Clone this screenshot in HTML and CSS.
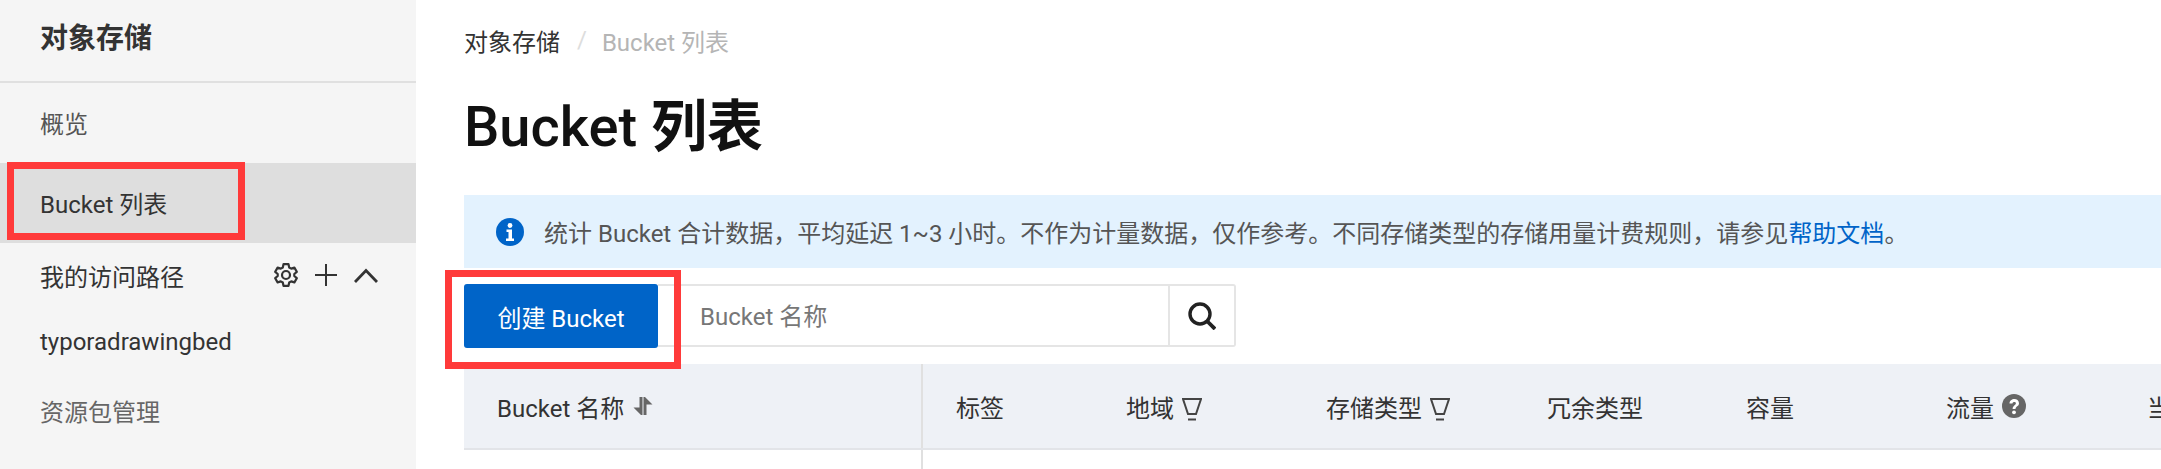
FILE: index.html
```html
<!DOCTYPE html>
<html lang="zh-CN">
<head>
<meta charset="UTF-8">
<meta name="viewport" content="width=device-width, initial-scale=1.0">
<title>Bucket 列表</title>
<link rel="stylesheet" href="styles.css">
</head>
<body>
  <div class="page">
    <aside class="sidebar">
      <div class="sidebar-title">对象存储</div>
      <div class="nav-item muted">概览</div>
      <div class="nav-item active">Bucket 列表</div>
      <div class="path-head">
        <span>我的访问路径</span>
        <span class="path-tools">
          <svg class="tool" viewBox="0 0 24 24" fill="none" stroke="#333" stroke-width="2.200" stroke-linejoin="round"><path d="M9.500 1.200h5l.7 3.300 2 1.100 3.200-1 2.400 4.200-2.500 2.200v2l2.500 2.200-2.400 4.200-3.200-1-2 1.100-.7 3.300h-5l-.7-3.300-2-1.100-3.200 1-2.400-4.200 2.500-2.200v-2L1.200 8.800l2.400-4.200 3.200 1 2-1.100z"/><circle cx="12" cy="12" r="4"/></svg>
          <svg class="tool" viewBox="0 0 24 24" fill="none" stroke="#333" stroke-width="2"><path d="M12 1v22M1 12h22"/></svg>
          <svg class="tool" viewBox="0 0 24 24" fill="none" stroke="#333" stroke-width="2.800"><path d="M1 19 12 7.500 23 19"/></svg>
        </span>
      </div>
      <div class="nav-item bucket">typoradrawingbed</div>
      <div class="nav-item muted pack">资源包管理</div>
    </aside>

    <main class="content">
      <div class="crumbs">
        <span>对象存储</span>
        <span class="crumb-sep">/</span>
        <span class="crumb-now">Bucket 列表</span>
      </div>
      <h1 class="page-title">Bucket <b>列表</b></h1>

      <div class="notice">
        <svg class="notice-icon" viewBox="0 0 28 28"><circle cx="14" cy="14" r="14" fill="#0064c8"/><circle cx="14" cy="7.500" r="2.400" fill="#fff"/><path d="M10.500 11.500h5.500v9h2v2.500h-8v-2.500h2.500v-6.500h-2z" fill="#fff"/></svg>
        <span>统计 Bucket 合计数据，平均延迟 1~3 小时。不作为计量数据，仅作参考。不同存储类型的存储用量计费规则，请参见<a class="link">帮助文档</a>。</span>
      </div>

      <div class="toolbar">
        <button class="btn-primary">创建 Bucket</button>
        <div class="search">
          <span class="search-input">Bucket 名称</span>
          <span class="search-btn">
            <svg class="search-icon" viewBox="0 0 28 28" fill="none" stroke="#222" stroke-width="3.400"><circle cx="12" cy="12" r="10"/><path d="m19 19 8 8" stroke-width="3.800"/></svg>
          </span>
        </div>
      </div>

      <div class="table-head">
        <div class="th th-name">Bucket 名称
          <svg class="sort" viewBox="0 0 20 20" fill="#666"><path d="M6.500 1h3v18H8L.5 11.500h6zM10.500 1H12l7.500 7.500h-6V19h-3z"/></svg>
        </div>
        <div class="th">标签</div>
        <div class="th">地域
          <svg class="filter" viewBox="0 0 20 24" fill="none" stroke="#444" stroke-width="2"><path d="M1 2h18l-2 6-3 9H6L3 8zM6 22.500h8"/></svg>
        </div>
        <div class="th">存储类型
          <svg class="filter" viewBox="0 0 20 24" fill="none" stroke="#444" stroke-width="2"><path d="M1 2h18l-2 6-3 9H6L3 8zM6 22.500h8"/></svg>
        </div>
        <div class="th">冗余类型</div>
        <div class="th">容量</div>
        <div class="th">流量
          <svg class="help" viewBox="0 0 24 24"><circle cx="12" cy="12" r="12" fill="#666"/><path d="M7.500 9.500c0-6 9.500-6 9.500-.3 0 3.300-3.500 3-3.500 5.800h-2.900c0-3.800 3.300-3.800 3.300-5.600 0-1.900-3.400-1.900-3.400.1z" fill="#fff"/><circle cx="12" cy="18.300" r="1.900" fill="#fff"/></svg>
        </div>
        <div class="th">当前</div>
      </div>
      <div class="table-row"><div class="cell-name"></div></div>
    </main>
  </div>

  <div class="mark mark-nav"></div>
  <div class="mark mark-btn"></div>
</body>
</html>
```

FILE: styles.css
```css
html, body {
  margin: 0;
  padding: 0;
  height: 100%;
  overflow: hidden;
}

body {
  font-family: Roboto, "Noto Sans CJK SC", sans-serif;
  font-size: 24px;
  color: #333;
  background-color: #fff;
}

.page {
  display: flex;
  height: 469px;
}

.sidebar {
  width: 416px;
  flex-shrink: 0;
  background-color: #f5f5f5;
}

.sidebar-title {
  height: 81px;
  line-height: 78px;
  padding-left: 40px;
  font-size: 28px;
  font-weight: bold;
  border-bottom: 2px solid #e0e0e0;
}

.nav-item {
  height: 80px;
  line-height: 84px;
  padding-left: 40px;
}

.muted {
  color: #555;
}

.active {
  background-color: #dedede;
}

.path-head {
  display: flex;
  justify-content: space-between;
  align-items: center;
  height: 68px;
  padding: 0 40px 4px;
  box-sizing: border-box;
}

.path-tools {
  display: flex;
  gap: 16px;
  margin-right: -2px;
}

.tool {
  width: 24px;
  height: 24px;
}

.bucket {
  height: 62px;
  line-height: 62px;
}

.pack {
  height: 80px;
  line-height: 80px;
  color: #666;
}

.content {
  flex: 1;
  min-width: 0;
  padding-left: 48px;
}

.crumbs {
  display: flex;
  align-items: center;
  height: 80px;
}

.crumb-sep {
  margin: 0 15px 0 17px;
  color: #ddd;
}

.crumb-now {
  color: #b5b5b5;
}

.page-title {
  height: 115px;
  margin: 0;
  line-height: 94px;
  font-size: 56px;
  font-weight: 500;
  color: #111;
}

.notice {
  display: flex;
  align-items: center;
  gap: 20px;
  height: 73px;
  padding-left: 32px;
  background-color: #e3f2fe;
  color: #555;
}

.notice-icon {
  width: 28px;
  height: 28px;
  flex-shrink: 0;
}

.link {
  color: #0064c8;
}

.toolbar {
  display: flex;
  margin-top: 16px;
  height: 64px;
}

.btn-primary {
  width: 194px;
  height: 64px;
  padding: 0;
  border: none;
  border-radius: 3px;
  background-color: #0064c8;
  color: #fff;
  font: inherit;
}

.search {
  display: flex;
  width: 578px;
  height: 63px;
  box-sizing: border-box;
  border: 2px solid #e5e5e5;
  border-left: none;
  border-radius: 0 3px 3px 0;
}

.search-input {
  flex: 1;
  padding-left: 42px;
  line-height: 62px;
  color: #777;
}

.search-btn {
  display: flex;
  align-items: center;
  justify-content: center;
  width: 64px;
  border-left: 2px solid #e5e5e5;
}

.search-icon {
  width: 28px;
  height: 28px;
}

.table-head {
  display: grid;
  grid-template-columns: 459px 170px 200px 221px 199px 200px 201px 100px;
  height: 84px;
  margin-top: 16px;
  background-color: #eef1f6;
  border-bottom: 2px solid #e2e4e8;
}

.th {
  display: flex;
  align-items: center;
  gap: 8px;
  padding-left: 33px;
  white-space: nowrap;
}

.th-name {
  border-right: 2px solid #e0e0e0;
}

.sort {
  width: 20px;
  height: 20px;
  margin-left: 1px;
}

.filter {
  width: 20px;
  height: 24px;
  margin-top: 6px;
}

.help {
  width: 24px;
  height: 24px;
}

.table-row {
  height: 40px;
}

.cell-name {
  width: 459px;
  height: 19px;
  box-sizing: border-box;
  border-right: 2px solid #e0e0e0;
}

.mark {
  position: absolute;
  box-sizing: border-box;
  border: 7px solid #ff3a3a;
}

.mark-nav {
  left: 7px;
  top: 162px;
  width: 238px;
  height: 78px;
}

.mark-btn {
  left: 445px;
  top: 270px;
  width: 236px;
  height: 99px;
}
```
